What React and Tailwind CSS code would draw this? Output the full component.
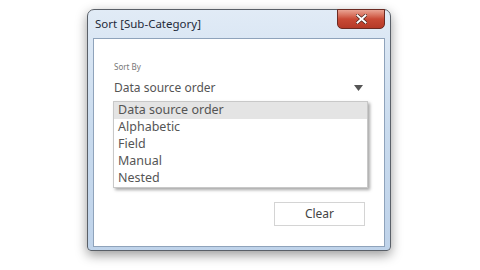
export default function App() {
  const items = ["Data source order", "Alphabetic", "Field", "Manual", "Nested"];
  return (
    <div className="w-[480px] h-[270px] bg-white overflow-hidden pl-[87px] pt-[9px]" style={{ fontFamily: '"Noto Sans", "Open Sans", sans-serif' }}>
      <div className="relative w-[304px] h-[242px] rounded-t-[7px] rounded-b-[4px] border border-[#5a6068] bg-gradient-to-b from-[#e1ebf6] via-[#c9dbee] to-[#bfd3ea] shadow-[0_4px_12px_rgba(0,0,0,0.4)] px-[5px] pb-[3px] flex flex-col">
        <div className="h-[28px] flex items-start pt-[6px] pl-[2px] text-[11.5px] text-[#1e2a3a] leading-[16px]">
          Sort [Sub-Category]
        </div>
        <div className="absolute top-[-1px] right-[5px] w-[48px] h-[20px] rounded-b-[5px] border border-[#6b2a22] bg-gradient-to-b from-[#e9a393] via-[#c94a36] to-[#b53a28] flex items-center justify-center">
          <svg width="11" height="10" viewBox="0 0 11 10">
            <path d="M1.5 1.5 L9.5 8.5 M9.5 1.5 L1.5 8.5" stroke="#3a1a14" strokeWidth="3.2" strokeLinecap="square" />
            <path d="M1.5 1.5 L9.5 8.5 M9.5 1.5 L1.5 8.5" stroke="#ffffff" strokeWidth="2" strokeLinecap="square" />
          </svg>
        </div>
        <div className="flex-1 bg-white border border-[#8fa3bb] pl-[19px] pr-[19px] pt-[22px] flex flex-col">
          <div className="text-[8px] leading-[12px] text-[#777] pl-[1px]">Sort By</div>
          <div className="mt-[6px] h-[18px] flex items-center justify-between pl-[1px] pr-[1px]">
            <span className="text-[12px] text-[#555]">Data source order</span>
            <svg width="9" height="6" viewBox="0 0 9 6" className="mr-[1px]">
              <path d="M0 0 H9 L4.5 6 Z" fill="#555" />
            </svg>
          </div>
          <div className="mt-[4px] w-[255px] border border-[#c8c8c8] bg-white shadow-[2px_2px_3px_rgba(0,0,0,0.35)] flex flex-col">
            {items.map((it, i) => (
              <div key={it} className={`h-[17px] pl-[4px] flex items-center text-[12.5px] text-[#555] ${i === 0 ? "bg-[#e4e4e4]" : ""}`}>
                {it}
              </div>
            ))}
          </div>
          <div className="mt-[14px] flex justify-end">
            <div className="w-[91px] h-[24px] border border-[#d4d4d4] bg-white flex items-center justify-center text-[12px] text-[#444]">
              Clear
            </div>
          </div>
        </div>
      </div>
    </div>
  );
}
